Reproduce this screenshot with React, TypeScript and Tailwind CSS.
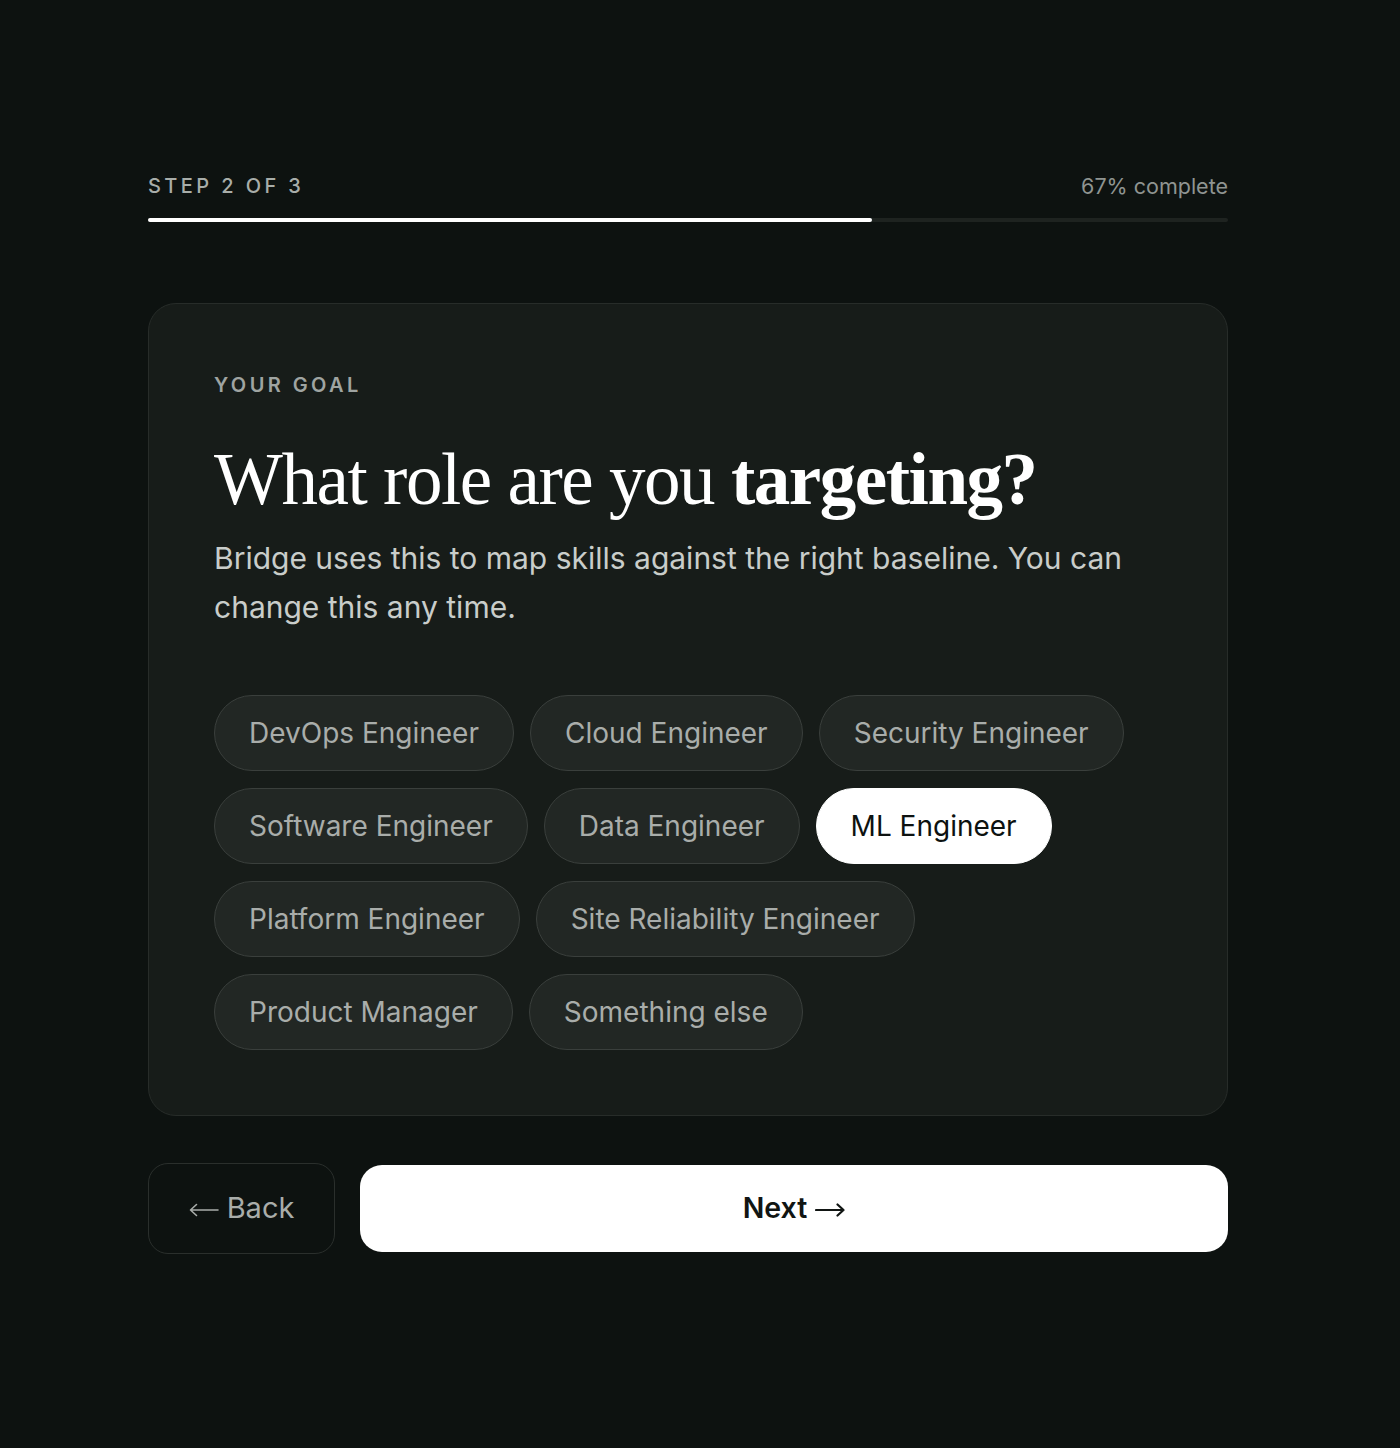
const roles = [
  "DevOps Engineer",
  "Cloud Engineer",
  "Security Engineer",
  "Software Engineer",
  "Data Engineer",
  "ML Engineer",
  "Platform Engineer",
  "Site Reliability Engineer",
  "Product Manager",
  "Something else",
];

const selected = "ML Engineer";

function Arrow({ dir, stroke }: { dir: "left" | "right"; stroke: number }) {
  return (
    <svg width="30" height="14" viewBox="0 0 30 14" fill="none" className="mt-[3px]">
      {dir === "left" ? (
        <path d="M29 7H1.5M7.5 1.5L1.5 7l6 5.5" stroke="currentColor" strokeWidth={stroke} strokeLinecap="round" strokeLinejoin="round" />
      ) : (
        <path d="M1 7h27.5M22.5 1.5l6 5.5-6 5.5" stroke="currentColor" strokeWidth={stroke} strokeLinecap="round" strokeLinejoin="round" />
      )}
    </svg>
  );
}

export default function App() {
  return (
    <div className="min-h-[1448px] w-full bg-[#0d1210] font-['Inter','Noto_Sans',sans-serif] text-white">
      <div className="ml-[148px] w-[1080px] pt-[170px]">
        {/* progress */}
        <div className="flex items-center justify-between">
          <p className="text-[20px] font-medium uppercase tracking-[0.17em] text-[#a8ada9]">Step 2 of 3</p>
          <p className="text-[21.5px] text-[#8f9491]">67% complete</p>
        </div>
        <div className="mt-[16px] h-[4px] w-full rounded-full bg-[#1e2320]">
          <div className="h-full w-[67%] rounded-full bg-white" />
        </div>

        {/* card */}
        <div className="mt-[81px] rounded-[28px] border border-[#272c29] bg-[#171c19] px-[65px] pb-[65px] pt-[66px]">
          <p className="text-[20px] font-semibold uppercase tracking-[0.17em] text-[#9fa4a1]">Your goal</p>
          <h1 className="mt-[40px] font-['Liberation_Serif','DejaVu_Serif',serif] text-[73px] leading-[1.1] tracking-[-0.02em] text-white">
            What role are you <span className="font-bold">targeting?</span>
          </h1>
          <p className="mt-[13px] max-w-[940px] text-[30px] leading-[49px] text-[#c9cdca]">
            Bridge uses this to map skills against the right baseline. You can change this any time.
          </p>

          <div className="mt-[63px] flex max-w-[950px] flex-wrap gap-x-[16px] gap-y-[17px]">
            {roles.map((role) =>
              role === selected ? (
                <button
                  key={role}
                  className="h-[76px] rounded-full border border-white bg-white px-[34px] text-[28px] text-[#0d1210]"
                >
                  {role}
                </button>
              ) : (
                <button
                  key={role}
                  className="h-[76px] rounded-full border border-[#3a3f3c] bg-[#222724] px-[34px] text-[28px] text-[#a9adaa]"
                >
                  {role}
                </button>
              )
            )}
          </div>
        </div>

        {/* actions */}
        <div className="mt-[47px] flex items-center gap-[25px]">
          <button className="flex h-[91px] w-[187px] items-center justify-center gap-[8px] rounded-[20px] border border-[#2a2f2c] text-[29px] text-[#a9adaa]">
            <Arrow dir="left" stroke={1.6} />
            <span>Back</span>
          </button>
          <button className="flex h-[87px] flex-1 items-center justify-center gap-[8px] rounded-[22px] bg-white text-[28.5px] font-semibold text-[#111513]">
            <span>Next</span>
            <Arrow dir="right" stroke={2.2} />
          </button>
        </div>
      </div>
    </div>
  );
}
